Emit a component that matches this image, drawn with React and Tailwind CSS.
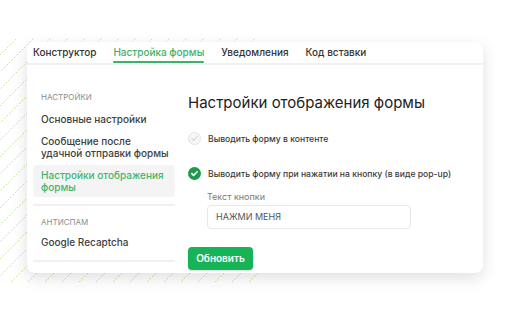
import React from 'react';

// Decorative hatched backdrop behind the card
const Hatch = () => {
  const w = 266;
  const h = 244;
  const lines = [];
  for (let x = -h; x < w; x += 17) {
    lines.push(<line key={x} x1={x} y1={h} x2={x + h} y2={0} />);
  }
  return (
    <svg className="absolute left-0 top-[38px]" width={w} height={h} viewBox={`0 0 ${w} ${h}`}>
      <g stroke="#b8de8c" strokeWidth="0.8" strokeDasharray="2 1.6">
        {lines}
      </g>
    </svg>
  );
};

const tabs = ['Конструктор', 'Настройка формы', 'Уведомления', 'Код вставки'];

const Radio = ({ checked }) =>
  checked ? (
    <svg width="13" height="13" viewBox="0 0 13 13">
      <circle cx="6.5" cy="6.5" r="6.5" fill="#1d9a4b" />
      <path d="M3.8 6.6l1.8 1.8 3.6-3.6" fill="none" stroke="#fff" strokeWidth="1.6" strokeLinecap="round" strokeLinejoin="round" />
    </svg>
  ) : (
    <svg width="13" height="13" viewBox="0 0 13 13">
      <circle cx="6.5" cy="6.5" r="6" fill="#f6f6f6" stroke="#e2e2e2" />
      <path d="M4 6.6l1.7 1.7 3.4-3.4" fill="none" stroke="#d4d4d4" strokeWidth="1.1" strokeLinecap="round" strokeLinejoin="round" />
    </svg>
  );

export default function App() {
  return (
    <div className="relative w-[509px] h-[316px] bg-white overflow-hidden" style={{ fontFamily: 'Inter, "Noto Sans", sans-serif' }}>
      <Hatch />
      <div className="relative ml-[27px] mt-[42px] w-[456px] h-[231px] bg-white rounded-[8px] shadow-[0_5px_16px_rgba(0,0,0,0.13)]">
        {/* Tabs */}
        <div className="flex gap-[17px] pl-[6px] h-[23px] border-b-2 border-[#f0f0f0]">
          {tabs.map((t, i) => (
            <div
              key={t}
              className={
                i === 1
                  ? 'relative pt-[3px] text-[10px] font-medium text-[#3cb26c] leading-[14px]'
                  : 'relative pt-[3px] text-[10px] font-medium text-[#333] leading-[14px]'
              }
            >
              {t}
              {i === 1 && <div className="absolute left-0 right-0 top-[19px] h-[2px] bg-[#3cb26c] rounded-full" />}
            </div>
          ))}
        </div>

        <div className="flex">
          {/* Sidebar */}
          <div className="ml-[6px] w-[142px] shrink-0 pt-[27px]">
            <div className="px-[8px] text-[8px] leading-[10px] text-[#8c8c8c] uppercase">Настройки</div>
            <div className="px-[8px] mt-[11px] text-[10px] leading-[12px] font-medium text-[#404040] whitespace-nowrap">Основные настройки</div>
            <div className="px-[8px] mt-[10px] text-[10px] leading-[12px] font-medium text-[#404040] whitespace-nowrap">
              Сообщение после
              <br />
              удачной отправки формы
            </div>
            <div className="mt-[6px] rounded-[4px] bg-[#f4f4f4] px-[8px] py-[4px] text-[10px] leading-[12px] font-medium text-[#3fb46f] whitespace-nowrap">
              Настройки отображения
              <br />
              формы
            </div>
            <div className="mt-[7px] h-[2px] bg-[#f0f0f0]" />
            <div className="px-[8px] mt-[11px] text-[8px] leading-[10px] text-[#8c8c8c] uppercase">Антиспам</div>
            <div className="px-[8px] mt-[9px] text-[10px] leading-[12px] font-medium text-[#404040]">Google Recaptcha</div>
            <div className="mt-[12px] h-[2px] bg-[#f0f0f0]" />
          </div>

          {/* Content */}
          <div className="ml-[13px] pt-[28px]">
            <div className="text-[15px] leading-[20px] text-[#222]">Настройки отображения формы</div>
            <div className="mt-[19px] flex items-center gap-[7px]">
              <Radio />
              <span className="text-[8.6px] leading-[12px] font-medium text-[#3a3a3a]">Выводить форму в контенте</span>
            </div>
            <div className="mt-[22px] flex items-center gap-[7px]">
              <Radio checked />
              <span className="text-[8.6px] leading-[12px] font-medium text-[#3a3a3a]">
                Выводить форму при нажатии на кнопку (в виде pop-up)
              </span>
            </div>
            <div className="ml-[19px]">
              <div className="mt-[11px] text-[9px] leading-[12px] text-[#7a7a7a]">Текст кнопки</div>
              <div className="mt-[2px] w-[204px] h-[24px] rounded-[4px] border border-[#e8e8e8] flex items-center px-[8px] text-[9px] text-[#555]">
                НАЖМИ МЕНЯ
              </div>
            </div>
            <button className="mt-[18px] w-[65px] h-[23px] rounded-[4px] bg-[#17b357] text-white text-[10px] font-semibold shadow-[0_1px_2px_rgba(0,0,0,0.15)]">
              Обновить
            </button>
          </div>
        </div>
      </div>
    </div>
  );
}
